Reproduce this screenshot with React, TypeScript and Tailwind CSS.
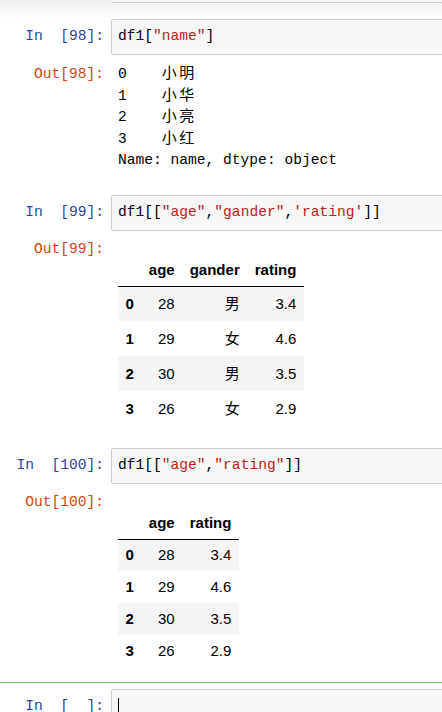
import React from "react";

const mono = "font-['Liberation_Mono','DejaVu_Sans_Mono','Noto_Sans_CJK_SC',monospace] text-[14.6px]";
const sans = "font-['Liberation_Sans',Arial,'Noto_Sans_CJK_SC',sans-serif]";

function Prompt({ label, kind }: { label: string; kind: "in" | "out" }) {
  return (
    <div
      className={`w-[111px] shrink-0 pr-[7px] text-right whitespace-pre leading-[21.5px] ${mono} ${
        kind === "in" ? "text-[#303f9f]" : "text-[#d84315]"
      }`}
    >
      {label}
    </div>
  );
}

function InputCell({ label, children }: { label: string; children?: React.ReactNode }) {
  return (
    <div className="flex items-center">
      <Prompt label={label} kind="in" />
      <div className={`-mr-[6px] flex h-[36px] flex-1 items-center rounded-l-[2px] border border-[#cfcfcf] bg-[#f7f7f7] pl-[6px] whitespace-pre text-black ${mono}`}>
        {children}
      </div>
    </div>
  );
}

const S = ({ children }: { children: React.ReactNode }) => <span className="text-[#ba2121]">{children}</span>;
const Cjk = ({ children }: { children: React.ReactNode }) => (
  <span className="font-['Noto_Sans_CJK_SC',sans-serif] text-[15px] leading-none tracking-[2.5px]">{children}</span>
);

const Line = ({ children }: { children: React.ReactNode }) => (
  <div className="h-[21.5px] leading-[21.5px]">{children}</div>
);

type Row = (string | number)[];

function DataTable({ cols, rows, rowH }: { cols: string[]; rows: Row[]; rowH: string }) {
  return (
    <table className={`mt-[15px] border-collapse text-[15px] leading-[18px] text-black ${sans}`}>
      <thead className="border-b border-black">
        <tr className="h-[32px]">
          <th className="px-[7.5px]"></th>
          {cols.map((c) => (
            <th key={c} className="px-[7.5px] text-right font-bold">
              {c}
            </th>
          ))}
        </tr>
      </thead>
      <tbody>
        {rows.map((r, i) => (
          <tr key={i} className={`${rowH} ${i % 2 === 0 ? "bg-[#f5f5f5]" : ""}`}>
            <th className="px-[7.5px] text-right font-bold">{i}</th>
            {r.map((v, j) => (
              <td key={j} className="px-[7.5px] text-right align-middle">
                {v}
              </td>
            ))}
          </tr>
        ))}
      </tbody>
    </table>
  );
}

export default function App() {
  return (
    <div className="h-[712px] w-[442px] overflow-hidden bg-white">
      <div className="h-[18px] bg-gradient-to-b from-[#eeeeee] to-white">
        <div className="ml-[111px] h-[3px] border-b border-[#cfcfcf] bg-[#f7f7f7]" />
      </div>

      <div className="mt-[1px]">
        <InputCell label="In  [98]:">
          df1[<S>"name"</S>]
        </InputCell>
      </div>
      <div className="mt-[9px] flex">
        <Prompt label="Out[98]:" kind="out" />
        <div className={`pl-[7px] whitespace-pre text-black ${mono}`}>
          <Line>0    <Cjk>小明</Cjk></Line>
          <Line>1    <Cjk>小华</Cjk></Line>
          <Line>2    <Cjk>小亮</Cjk></Line>
          <Line>3    <Cjk>小红</Cjk></Line>
          <Line>Name: name, dtype: object</Line>
        </div>
      </div>

      <div className="mt-[23.5px]">
        <InputCell label="In  [99]:">
          df1[[<S>"age"</S>,<S>"gander"</S>,<S>'rating'</S>]]
        </InputCell>
      </div>
      <div className="mt-[8px] flex">
        <Prompt label="Out[99]:" kind="out" />
        <div className="pl-[7px]">
          <DataTable
            cols={["age", "gander", "rating"]}
            rowH="h-[35px]"
            rows={[
              [28, "男", 3.4],
              [29, "女", 4.6],
              [30, "男", 3.5],
              [26, "女", 2.9],
            ]}
          />
        </div>
      </div>

      <div className="mt-[22px]">
        <InputCell label="In  [100]:">
          df1[[<S>"age"</S>,<S>"rating"</S>]]
        </InputCell>
      </div>
      <div className="mt-[8px] flex">
        <Prompt label="Out[100]:" kind="out" />
        <div className="pl-[7px]">
          <DataTable
            cols={["age", "rating"]}
            rowH="h-[32px]"
            rows={[
              [28, 3.4],
              [29, 4.6],
              [30, 3.5],
              [26, 2.9],
            ]}
          />
        </div>
      </div>

      <div className="mt-[15px] border-t border-[#66bb6a] pt-[6px]">
        <InputCell label="In  [  ]:">
          <span className="h-[18px] w-px bg-black" />
        </InputCell>
      </div>
    </div>
  );
}
